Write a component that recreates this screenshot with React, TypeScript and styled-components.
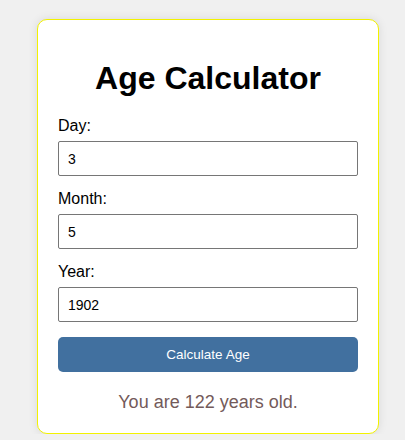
import React, { useState } from "react";
import styled, { createGlobalStyle } from "styled-components";

const Global = createGlobalStyle`
  html, body { margin: 0; padding: 0; background: #f0f0f0; }
  body { font-family: "Liberation Sans", Arial, sans-serif; }
`;

const Page = styled.div`
  padding: 19px 0 0 37px;
`;

const Card = styled.div`
  width: 300px;
  padding: 20px;
  background: #ffffff;
  border: 1px solid #f2f200;
  border-radius: 10px;
  box-shadow: 0 0 10px rgba(0, 0, 0, 0.1);
`;

const Title = styled.h1`
  margin: 20px 0 20px;
  font-size: 32px;
  line-height: 37px;
  font-weight: bold;
  text-align: center;
  color: #000;
`;

const Group = styled.div<{ $last?: boolean }>`
  margin-bottom: ${(p) => (p.$last ? "15px" : "14px")};
`;

const Label = styled.label`
  display: block;
  font-size: 16px;
  line-height: 18px;
  color: #000;
  margin-bottom: 6px;
`;

const Input = styled.input`
  display: block;
  box-sizing: border-box;
  width: 100%;
  height: 35px;
  padding: 8px 9px;
  font-family: "Liberation Sans", Arial, sans-serif;
  font-size: 14px;
  color: #000;
  border: 1px solid #767676;
  border-radius: 2px;
  background: #fff;
  outline: none;
`;

const Button = styled.button`
  display: block;
  width: 100%;
  height: 35px;
  border: none;
  border-radius: 5px;
  background: #41709f;
  color: #ffffff;
  font-family: "Liberation Sans", Arial, sans-serif;
  font-size: 13.5px;
  cursor: pointer;
`;

const Result = styled.p`
  margin: 20px 0 0;
  text-align: center;
  font-size: 18px;
  line-height: 21px;
  color: #735a5a;
`;

export default function App() {
  const [day, setDay] = useState("3");
  const [month, setMonth] = useState("5");
  const [year, setYear] = useState("1902");
  return (
    <>
      <Global />
      <Page>
        <Card>
          <Title>Age Calculator</Title>
          <Group>
            <Label>Day:</Label>
            <Input value={day} onChange={(e) => setDay(e.target.value)} />
          </Group>
          <Group>
            <Label>Month:</Label>
            <Input value={month} onChange={(e) => setMonth(e.target.value)} />
          </Group>
          <Group $last>
            <Label>Year:</Label>
            <Input value={year} onChange={(e) => setYear(e.target.value)} />
          </Group>
          <Button>Calculate Age</Button>
          <Result>You are 122 years old.</Result>
        </Card>
      </Page>
    </>
  );
}
